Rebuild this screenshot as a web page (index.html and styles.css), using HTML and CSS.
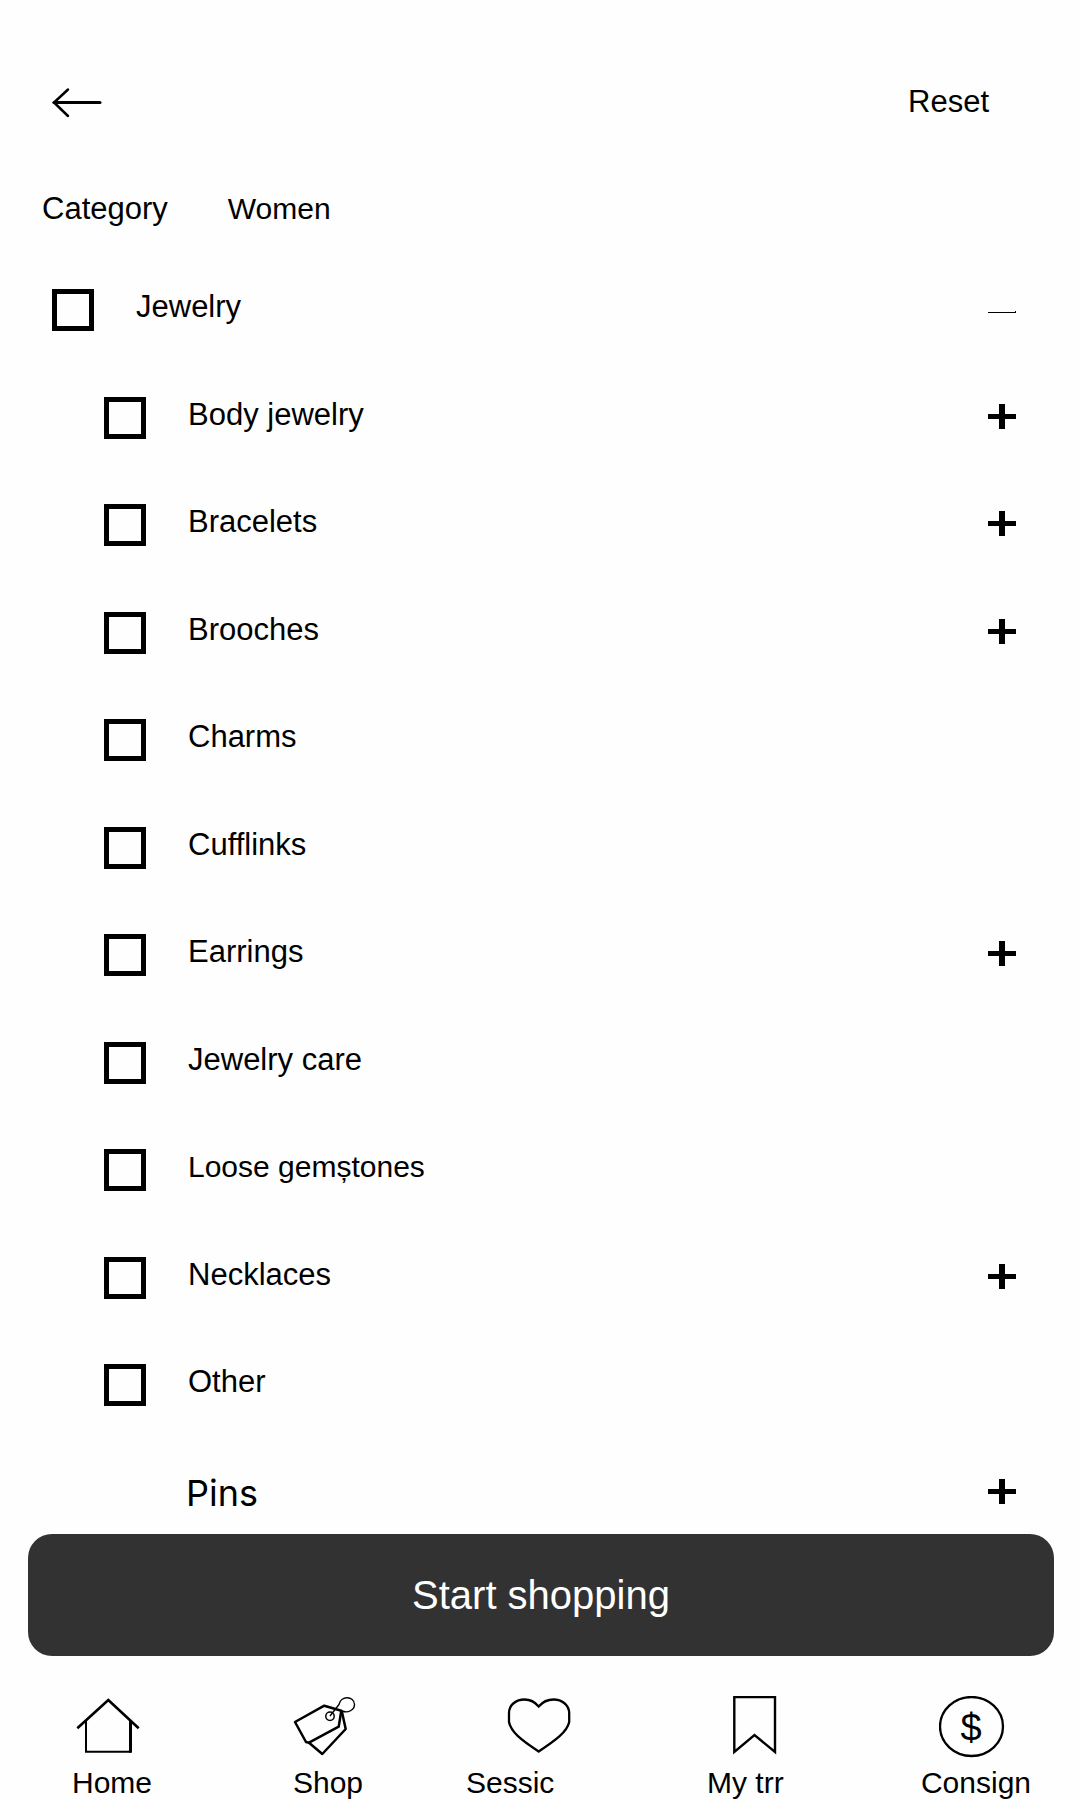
FILE: index.html
```html
<!DOCTYPE html>
<html lang="en">
<head>
<meta charset="utf-8">
<meta name="viewport" content="width=device-width, initial-scale=1">
<title>Category</title>
<link rel="stylesheet" href="styles.css">
</head>
<body>
<svg class="sprite" aria-hidden="true">
  <symbol id="plus" viewBox="0 0 28 38"><path d="M0 19.5H28" stroke="#000" stroke-width="5"/><path d="M14 7V32" stroke="#000" stroke-width="6"/></symbol>
  <symbol id="minus" viewBox="0 0 28 38"><path d="M0 23.5H28M27.5 22V24" stroke="#000" stroke-width="1"/></symbol>
</svg>

<header class="topbar">
  <button class="plain" type="button" aria-label="Back">
    <svg class="back-icon" viewBox="0 0 50 38" fill="none" stroke="#000" stroke-linecap="round"><path d="M2 19.5H48" stroke-width="3"/><path d="M16 6.500L2 19.500L16 33" stroke-width="2.500"/></svg>
  </button>
  <button class="plain" type="button">Reset</button>
</header>

<nav class="crumbs" aria-label="Filter">
  <a href="#category">Category</a>
  <a class="small" href="#women">Women</a>
</nav>

<main>
  <ul class="list">
    <li class="row row-top"><label class="choice"><input type="checkbox"><span>Jewelry</span></label><button class="plain" type="button" aria-label="Collapse Jewelry"><svg class="toggle"><use href="#minus"/></svg></button></li>
    <li class="row"><label class="choice"><input type="checkbox"><span>Body jewelry</span></label><button class="plain" type="button" aria-label="Expand Body jewelry"><svg class="toggle"><use href="#plus"/></svg></button></li>
    <li class="row"><label class="choice"><input type="checkbox"><span>Bracelets</span></label><button class="plain" type="button" aria-label="Expand Bracelets"><svg class="toggle"><use href="#plus"/></svg></button></li>
    <li class="row"><label class="choice"><input type="checkbox"><span>Brooches</span></label><button class="plain" type="button" aria-label="Expand Brooches"><svg class="toggle"><use href="#plus"/></svg></button></li>
    <li class="row"><label class="choice"><input type="checkbox"><span>Charms</span></label></li>
    <li class="row"><label class="choice"><input type="checkbox"><span>Cufflinks</span></label></li>
    <li class="row"><label class="choice"><input type="checkbox"><span>Earrings</span></label><button class="plain" type="button" aria-label="Expand Earrings"><svg class="toggle"><use href="#plus"/></svg></button></li>
    <li class="row"><label class="choice"><input type="checkbox"><span>Jewelry care</span></label></li>
    <li class="row"><label class="choice"><input type="checkbox"><span class="small">Loose gemștones</span></label></li>
    <li class="row"><label class="choice"><input type="checkbox"><span>Necklaces</span></label><button class="plain" type="button" aria-label="Expand Necklaces"><svg class="toggle"><use href="#plus"/></svg></button></li>
    <li class="row"><label class="choice"><input type="checkbox"><span>Other</span></label></li>
    <li class="row row-bare"><span>Pins</span><button class="plain" type="button" aria-label="Expand Pins"><svg class="toggle"><use href="#plus"/></svg></button></li>
  </ul>
</main>

<div class="action"><button class="start" type="button">Start shopping</button></div>

<nav class="tabs" aria-label="Main">
  <a class="tab" href="#home">
    <svg class="tab-icon" viewBox="0 0 66 62" fill="none" stroke="#000" stroke-width="2"><path d="M2.300 32.300L33.300 4L63.700 32.300" stroke-width="2.600"/><path d="M11 25V55.700H56"/><path d="M55.500 25V56.700" stroke-width="3"/></svg>
    <span class="tab-label">Home</span>
  </a>
  <a class="tab" href="#shop">
    <svg class="tab-icon" viewBox="0 0 66 62" fill="none" stroke="#000" stroke-width="2.500" stroke-linejoin="round"><path d="M4 26L33.300 9.700L50.300 14.700L47.700 30.700L18 46.700L15 46Z"/><path d="M18 46.700L31.300 58L54.700 33L50.700 14.700"/><circle cx="39" cy="20.300" r="4.200" stroke-width="1.500"/><path d="M39 20L48 8.500C50 -1 63 0 63.500 8.500C63.500 14 57 17.500 51 15" stroke-width="1.400"/></svg>
    <span class="tab-label">Shop</span>
  </a>
  <a class="tab" href="#sessions">
    <svg class="tab-icon" viewBox="0 0 66 62" fill="none" stroke="#000" stroke-width="2.300"><path d="M31.700 10.500C28 6 24 3.500 17.500 3.500C9 3.500 2 9 2 17V26C4 36 14 44 31.700 55.500C49 44 60 36 62.200 26V17C62 9 55 3.500 46.500 3.500C39.500 3.500 35.500 6 31.700 10.500Z"/></svg>
    <span class="tab-label tab-label-long">Sessic</span>
  </a>
  <a class="tab" href="#my">
    <svg class="tab-icon" viewBox="0 0 66 62" fill="none" stroke="#000"><path d="M11.300 1H52V56L31.500 39L11.300 56Z" stroke-width="2.400"/></svg>
    <span class="tab-label tab-label-mid">My trr</span>
  </a>
  <a class="tab" href="#consign">
    <svg class="tab-icon" viewBox="0 0 66 62"><ellipse cx="32.500" cy="30.500" rx="31.500" ry="29.500" fill="none" stroke="#000" stroke-width="2.300"/><text class="dollar" x="32" y="45" text-anchor="middle">$</text></svg>
    <span class="tab-label">Consign</span>
  </a>
</nav>
</body>
</html>
```

FILE: styles.css
```css
* {
  box-sizing: border-box;
}

body {
  margin: 0;
  background: #fefefe;
  color: #000;
  font-family: "Liberation Sans", Arial, sans-serif;
  font-size: 31px;
  line-height: 36px;
}

a {
  color: inherit;
  text-decoration: none;
}

svg {
  display: block;
}

.sprite {
  display: none;
}

.plain {
  margin: 0;
  padding: 0;
  border: 0;
  background: none;
  color: inherit;
  font: inherit;
}

.small {
  font-size: 30px;
}

.topbar {
  display: flex;
  justify-content: space-between;
  align-items: center;
  padding: 83px 91px 0 52px;
}

.back-icon {
  width: 50px;
  height: 38px;
}

.crumbs {
  display: flex;
  gap: 60px;
  padding: 70px 42px 62px;
}

.list {
  display: grid;
  grid-template-rows: repeat(5, 108px 107px) 108px 62px;
  margin: 0;
  padding: 0 64px 0 104px;
  list-style: none;
}

.row {
  display: flex;
  justify-content: space-between;
  align-items: flex-start;
}

.row-top {
  margin-left: -52px;
}

.row-bare {
  padding-left: 82px;
  font-family: Inter, sans-serif;
  font-size: 36px;
  line-height: 42px;
}

.choice {
  display: flex;
  align-items: flex-start;
  gap: 42px;
}

.choice input {
  appearance: none;
  width: 42px;
  height: 42px;
  margin: 0;
  border: 5px solid #000;
  border-radius: 0;
}

.choice input:checked {
  background: #000;
}

.toggle {
  width: 28px;
  height: 38px;
}

.action {
  padding: 0 26px 0 28px;
}

.start {
  display: block;
  width: 100%;
  padding: 38px 24px;
  border: 0;
  border-radius: 24px;
  background: #323232;
  color: #fff;
  font: 40px/46px "Liberation Sans", Arial, sans-serif;
}

.tabs {
  display: grid;
  grid-template-columns: repeat(5, 1fr);
  padding-top: 40px;
  font-size: 30px;
  line-height: 34px;
}

.tab {
  display: flex;
  flex-direction: column;
  align-items: center;
  gap: 8px;
}

.tab-icon {
  width: 66px;
  height: 62px;
}

.tab-label {
  padding-left: 8px;
}

.tab-label-long {
  width: 164px;
}

.tab-label-mid {
  width: 114px;
}

.dollar {
  font-size: 38px;
}
```
